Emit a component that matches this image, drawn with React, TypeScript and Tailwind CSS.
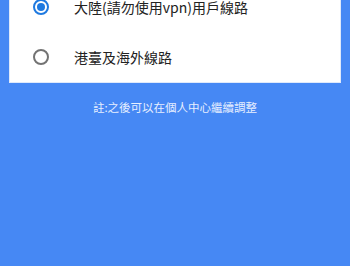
import React, { useState } from "react";

const lines = [
  { id: "cn", label: "大陸(請勿使用vpn)用戶線路" },
  { id: "hk", label: "港臺及海外線路" },
];

function Radio({ checked }: { checked: boolean }) {
  return (
    <span
      className={
        checked
          ? "flex h-4 w-4 shrink-0 items-center justify-center rounded-full border-2 border-[#1f7ae0]"
          : "flex h-4 w-4 shrink-0 items-center justify-center rounded-full border-2 border-[#737373]"
      }
    >
      {checked && <span className="h-2 w-2 rounded-full bg-[#1f7ae0]" />}
    </span>
  );
}

export default function App() {
  const [selected, setSelected] = useState("cn");

  return (
    <div
      className="h-[266px] w-[350px] overflow-hidden bg-[#4688f4]"
      style={{ fontFamily: '"Noto Sans CJK TC", "Noto Sans", sans-serif' }}
    >
      <div className="mx-[9px] -mt-[19px] border border-[#dfe9fb] bg-white">
        {lines.map((l) => (
          <button
            key={l.id}
            onClick={() => setSelected(l.id)}
            className="flex h-[50px] w-full items-center pl-[23px] text-left"
          >
            <Radio checked={selected === l.id} />
            <span className="ml-[25px] text-[14px] leading-[20px] text-[#222]">{l.label}</span>
          </button>
        ))}
      </div>
      <p className="mt-[19px] text-center text-[11.5px] leading-none text-[#e6efff]">
        註:之後可以在個人中心繼續調整
      </p>
    </div>
  );
}
